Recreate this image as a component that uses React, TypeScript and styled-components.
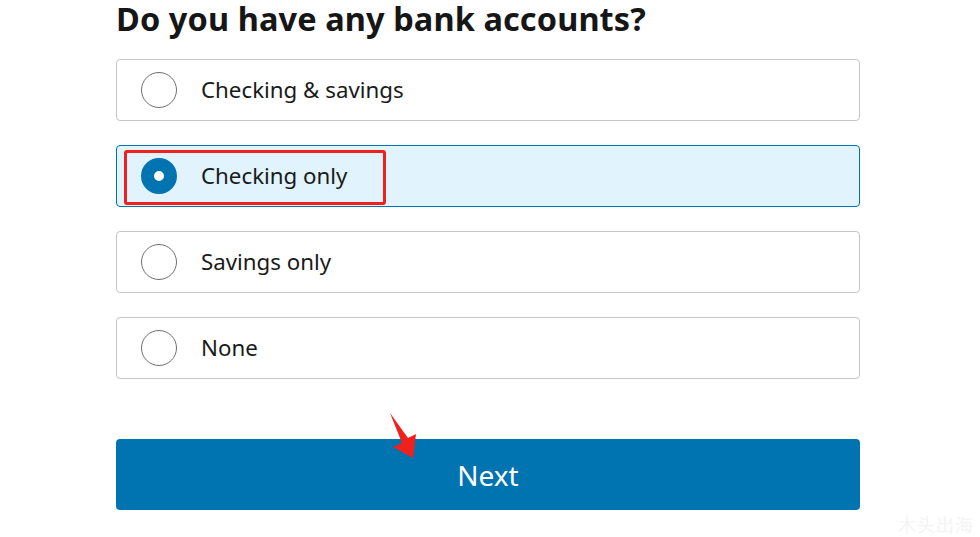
import React, { useState } from "react";
import styled, { createGlobalStyle } from "styled-components";

const Global = createGlobalStyle`
  html, body { margin: 0; padding: 0; background: #ffffff; }
  body { font-family: "Noto Sans", "Open Sans", sans-serif; color: #1a1a1a; }
`;

const Page = styled.div`
  position: relative;
  width: 980px;
  height: 537px;
  overflow: hidden;
  background: #fff;
`;

const Column = styled.div`
  width: 744px;
  margin-left: 116px;
  display: flex;
  flex-direction: column;
`;

const Title = styled.h1`
  margin: 0;
  height: 38px;
  font-size: 32.5px;
  line-height: 38px;
  font-weight: 700;
  color: #161616;
  letter-spacing: 0.1px;
`;

const Options = styled.div`
  margin-top: 21px;
  display: flex;
  flex-direction: column;
  gap: 24px;
`;

const Card = styled.label<{ $selected: boolean }>`
  position: relative;
  box-sizing: border-box;
  height: 62px;
  display: flex;
  align-items: center;
  padding-left: 24px;
  gap: 24px;
  border-radius: 4px;
  border: 1px solid ${(p) => (p.$selected ? "#0073b1" : "#c6c6c6")};
  background: ${(p) => (p.$selected ? "#e1f4fd" : "#ffffff")};
  cursor: pointer;
`;

const Radio = styled.span<{ $selected: boolean }>`
  box-sizing: border-box;
  width: 36px;
  height: 36px;
  border-radius: 50%;
  flex: none;
  border: ${(p) => (p.$selected ? "13px solid #0073b1" : "1px solid #6f6f6f")};
  background: #fff;
`;

const OptionText = styled.span`
  font-size: 22.3px;
  color: #1a1a1a;
  line-height: 30px;
  margin-top: -1px;
`;

const Highlight = styled.span`
  position: absolute;
  left: 7px;
  top: 4px;
  width: 262px;
  height: 55px;
  box-sizing: border-box;
  border: 3px solid #f0201c;
  border-radius: 3px;
  pointer-events: none;
`;

const NextButton = styled.button`
  margin-top: 60px;
  height: 71px;
  width: 744px;
  border: none;
  border-radius: 4px;
  background: #0073b1;
  color: #ffffff;
  font-family: "Noto Sans", "Open Sans", sans-serif;
  font-size: 28px;
  cursor: pointer;
`;

const Arrow = styled.svg`
  position: absolute;
  left: 385px;
  top: 408px;
  width: 40px;
  height: 55px;
`;

const Watermark = styled.span`
  position: absolute;
  right: 6px;
  bottom: 0px;
  font-family: "Noto Sans CJK SC", sans-serif;
  font-size: 18px;
  color: #f4f4f4;
  letter-spacing: 1px;
`;

const options = ["Checking & savings", "Checking only", "Savings only", "None"];

export default function App() {
  const [sel, setSel] = useState(1);
  return (
    <Page>
      <Global />
      <Column>
        <Title>Do you have any bank accounts?</Title>
        <Options>
          {options.map((o, i) => (
            <Card key={o} $selected={sel === i} onClick={() => setSel(i)}>
              <Radio $selected={sel === i} />
              <OptionText>{o}</OptionText>
              {i === 1 && <Highlight />}
            </Card>
          ))}
        </Options>
        <NextButton>Next</NextButton>
      </Column>
      <Arrow viewBox="0 0 40 55">
        <polygon points="5,5 23,30 31,26 28,50 8,39 17,35" fill="#f0201c" />
      </Arrow>
      <Watermark>木头出海</Watermark>
    </Page>
  );
}
